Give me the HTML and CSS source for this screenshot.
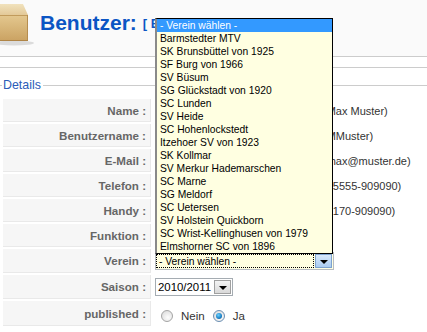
FILE: index.html
```html
<!DOCTYPE html>
<html lang="de">
<head>
    <meta charset="UTF-8">
    <meta name="viewport" content="width=device-width, initial-scale=1.0">
    <title>Benutzer: [ Bearbeiten ]</title>
    <link rel="stylesheet" href="styles.css">
</head>
<body>
    <div class="toolbar-box">
        <div class="header">
            <svg class="header-icon" width="34" height="48" viewBox="0 0 34 48">
                <defs>
                    <linearGradient id="boxFront" x1="0" y1="0" x2="0" y2="1">
                        <stop offset="0" stop-color="#e4c88f"/>
                        <stop offset="1" stop-color="#caa262"/>
                    </linearGradient>
                    <linearGradient id="boxLid" x1="0" y1="0" x2="0" y2="1">
                        <stop offset="0" stop-color="#f1e2bd"/>
                        <stop offset="1" stop-color="#e3c998"/>
                    </linearGradient>
                </defs>
                <ellipse cx="14" cy="43" rx="20" ry="2.5" fill="#000" opacity=".12"/>
                <path d="M-4 4 H23 L28 15 H-4 Z" fill="url(#boxLid)"/>
                <rect x="-4" y="15" width="32" height="26" fill="url(#boxFront)"/>
                <path d="M-4 15.5 H28" stroke="#c19b5c" stroke-width="1"/>
                <path d="M27.5 15 V41" stroke="#b68d4f" stroke-width="1"/>
                <path d="M-4 40.5 H28" stroke="#b08546" stroke-width="1"/>
            </svg>
            <h2 class="header-title">Benutzer: <small>[ Bearbeiten ]</small></h2>
        </div>
    </div>

    <div class="content">
        <fieldset class="details">
            <legend>Details</legend>
            <table class="admintable">
                <tr>
                    <td class="key">Name :</td>
                    <td class="value"><input class="inputbox" type="text" value="Max Muster"><span class="current">(Max Muster)</span></td>
                </tr>
                <tr>
                    <td class="key">Benutzername :</td>
                    <td class="value"><input class="inputbox" type="text" value="MMuster"><span class="current">(MMuster)</span></td>
                </tr>
                <tr>
                    <td class="key">E-Mail :</td>
                    <td class="value"><input class="inputbox" type="text" value="max@muster.de"><span class="current">(max@muster.de)</span></td>
                </tr>
                <tr>
                    <td class="key">Telefon :</td>
                    <td class="value"><input class="inputbox" type="text" value="05555-909090"><span class="current">(05555-909090)</span></td>
                </tr>
                <tr>
                    <td class="key">Handy :</td>
                    <td class="value"><input class="inputbox" type="text" value="0170-909090"><span class="current">(0170-909090)</span></td>
                </tr>
                <tr>
                    <td class="key">Funktion :</td>
                    <td class="value"><input class="inputbox" type="text" value=""></td>
                </tr>
                <tr class="row-select">
                    <td class="key">Verein :</td>
                    <td class="value">
                        <div class="select select-verein focused">
                            <span class="select-text">- Verein wählen -</span>
                            <span class="select-button"><span class="arrow"></span></span>

                            <!-- opened list of the Verein select -->
                            <ul class="select-list">
                                <li class="selected">- Verein wählen -</li>
                                <li>Barmstedter MTV</li>
                                <li>SK Brunsbüttel von 1925</li>
                                <li>SF Burg von 1966</li>
                                <li>SV Büsum</li>
                                <li>SG Glückstadt von 1920</li>
                                <li>SC Lunden</li>
                                <li>SV Heide</li>
                                <li>SC Hohenlockstedt</li>
                                <li>Itzehoer SV von 1923</li>
                                <li>SK Kollmar</li>
                                <li>SV Merkur Hademarschen</li>
                                <li>SC Marne</li>
                                <li>SG Meldorf</li>
                                <li>SC Uetersen</li>
                                <li>SV Holstein Quickborn</li>
                                <li>SC Wrist-Kellinghusen von 1979</li>
                                <li>Elmshorner SC von 1896</li>
                            </ul>
                        </div>
                    </td>
                </tr>
                <tr class="row-select">
                    <td class="key">Saison :</td>
                    <td class="value">
                        <div class="select select-saison">
                            <span class="select-text">2010/2011</span>
                            <span class="select-button"><span class="arrow"></span></span>
                        </div>
                    </td>
                </tr>
                <tr class="row-radio">
                    <td class="key">published :</td>
                    <td class="value">
                        <div class="radio-group">
                            <label class="radio"><span class="radio-dot"></span>Nein</label>
                            <label class="radio"><span class="radio-dot checked"></span>Ja</label>
                        </div>
                    </td>
                </tr>
            </table>
        </fieldset>
    </div>
</body>
</html>
```

FILE: styles.css
```css
* {
    margin: 0;
    padding: 0;
    box-sizing: border-box;
}

body {
    font-family: "Liberation Sans", Arial, Helvetica, sans-serif;
    font-size: 11px;
    color: #333;
    background: #fff;
    overflow: hidden;
}

/* header */

.toolbar-box {
    height: 57px;
    background: #fafafa;
    border-bottom: 1px solid #ccc;
}

.header {
    display: flex;
    align-items: flex-start;
}

.header-icon {
    display: block;
    flex-shrink: 0;
}

.header-title {
    margin: 11px 0 0 6px;
    font-size: 21px;
    line-height: 24px;
    font-weight: bold;
    color: #0b55c4;
    white-space: nowrap;
}

.header-title small {
    font-size: 13px;
    vertical-align: 2px;
}

/* content */

.content {
    margin-top: 10px;
    border-top: 1px solid #ccc;
}

.details {
    margin-top: 10px;
    border: none;
    border-top: 1px solid #ccc;
    padding: 5px 0 0 2px;
}

.details legend {
    margin-left: 0;
    padding: 0 2px 0 1px;
    font-size: 12.4px;
    line-height: 14px;
    color: #2b5cb8;
}

.admintable {
    border-collapse: separate;
    border-spacing: 1px 2px;
}

.admintable td {
    height: 22px;
    vertical-align: middle;
}

.admintable td.key {
    width: 148px;
    padding: 0 4px 0 3px;
    background: #f6f6f6;
    border-bottom: 1px solid #e9e9e9;
    border-right: 1px solid #e9e9e9;
    text-align: right;
    font-weight: bold;
    font-size: 11.6px;
    color: #666;
    height: 23px;
}

.admintable .row-select td.key {
    height: 24px;
}

.admintable .row-radio td.key {
    height: 25px;
}

.admintable td.value {
    padding: 0 3px;
    white-space: nowrap;
}

.inputbox {
    width: 164px;
    height: 18px;
    margin-right: 4px;
    padding: 1px 2px;
    border: 1px solid #a5acb2;
    font-family: inherit;
    font-size: 11px;
    vertical-align: middle;
}

.current {
    font-size: 11px;
    color: #333;
    vertical-align: middle;
}

/* select boxes */

.select {
    position: relative;
    display: flex;
    align-items: stretch;
    border: 1px solid #a5acb2;
    background: #fff;
    color: #000;
}

.select-text {
    flex: 1;
    padding-left: 2px;
    white-space: nowrap;
}

.select-button {
    width: 17px;
    margin: 1px;
    border: 1px solid #a0a0a0;
    background: linear-gradient(#f4f4f4, #d9d9d9);
    display: flex;
    align-items: center;
    justify-content: center;
}

.arrow {
    width: 0;
    height: 0;
    border-left: 4px solid transparent;
    border-right: 4px solid transparent;
    border-top: 4px solid #000;
    margin-top: 2px;
}

.select-verein {
    width: 179px;
    height: 18px;
    background: #ffffe1;
    border-color: #b7bcc2;
    font-size: 10.3px;
    line-height: 14px;
}

.select-verein .select-text {
    margin: 1px 0 1px 0;
    border: 1px dotted #000;
    padding-left: 2px;
}

.select-verein .select-button {
    border-color: #7da2ce;
    background: linear-gradient(#d9e9fb, #a9cbf1);
}

.select-saison {
    width: 78px;
    height: 18px;
    font-size: 11.4px;
    line-height: 16px;
}

.select-saison .select-text {
    padding-left: 2px;
}

/* the opened drop down list */

.select-list {
    position: absolute;
    left: -1px;
    bottom: calc(100% - 1px);
    width: 178px;
    list-style: none;
    background: #ffffe1;
    border: 1px solid #000;
    border-left: 2px solid #8a8a8a;
    font-size: 10.3px;
    color: #000;
    z-index: 10;
}

.select-list li {
    height: 13px;
    line-height: 13px;
    padding-left: 3px;
    white-space: nowrap;
}

.select-list li.selected {
    background: #3399ff;
    color: #fff;
}

/* radio buttons */

.radio-group {
    display: flex;
    align-items: center;
    gap: 8px;
    margin: 5px 0 0 6px;
}

.radio {
    display: flex;
    align-items: center;
    gap: 8px;
    font-size: 11.5px;
    color: #333;
}

.radio-dot {
    width: 12px;
    height: 12px;
    border-radius: 50%;
    border: 1px solid #a4a4a4;
    background: radial-gradient(circle at 60% 65%, #fdfdfd 0%, #e2e2e2 70%, #cfcfcf 100%);
    position: relative;
}

.radio-dot.checked {
    border-color: #6b8fb3;
}

.radio-dot.checked::after {
    content: '';
    position: absolute;
    left: 2px;
    top: 2px;
    width: 6px;
    height: 6px;
    border-radius: 50%;
    background: radial-gradient(circle at 40% 35%, #6ad1ff 0%, #1b7fc4 60%, #0d4f8a 100%);
}
```
